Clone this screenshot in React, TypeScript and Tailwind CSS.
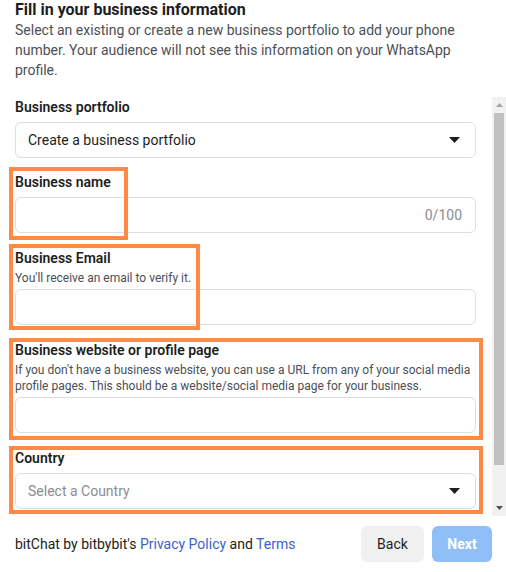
import { ReactNode } from 'react'

function Caret() {
  return (
    <svg width="11" height="6" viewBox="0 0 11 6" className="shrink-0">
      <path d="M0 0h11L5.5 6z" fill="#1c1e21" />
    </svg>
  )
}

function SelectBox({ value, placeholder }: { value: string; placeholder?: boolean }) {
  return (
    <div className="mt-[5px] flex h-9 items-center justify-between rounded-md border border-[#dadde1] bg-white pl-3 pr-[15px]">
      <span className={placeholder ? 'text-[14px] text-[#8a8d91]' : 'text-[14px] text-[#1c1e21]'}>{value}</span>
      <Caret />
    </div>
  )
}

function Field({
  label,
  help,
  children,
  className,
}: {
  label: string
  help?: ReactNode
  children: ReactNode
  className?: string
}) {
  return (
    <div className={className}>
      <div className="text-[14px] font-semibold leading-5 text-[#1c1e21]">{label}</div>
      {help && <div className="mt-[2px] text-[12px] leading-4 text-[#4b4f56]">{help}</div>}
      {children}
    </div>
  )
}

function Highlight({ className }: { className: string }) {
  return <div className={`pointer-events-none absolute border-4 border-[#ff8a45] ${className}`} />
}

export default function App() {
  return (
    <div className="relative flex h-[572px] w-[506px] flex-col overflow-hidden bg-white font-['Roboto',sans-serif] text-[#1c1e21]">
      <header className="shrink-0 px-[15px] pb-[17px]">
        <h1 className="text-[16px] font-bold leading-5 text-[#1c1e21]">Fill in your business information</h1>
        <p className="text-[14px] leading-5 text-[#4b4f56]">
          Select an existing or create a new business portfolio to add your phone number. Your audience will not
          see this information on your WhatsApp profile.
        </p>
      </header>

      <div className="flex min-h-0 flex-1">
        <div className="flex-1 overflow-hidden pl-[15px] pr-[16px]">
          <Field label="Business portfolio">
            <SelectBox value="Create a business portfolio" />
          </Field>

          <Field label="Business name" className="mt-[14px]">
            <div className="mt-[5px] flex h-9 items-center justify-end rounded-md border border-[#dadde1] pr-[13px]">
              <span className="text-[14px] text-[#8a8d91]">0/100</span>
            </div>
          </Field>

          <Field label="Business Email" help="You'll receive an email to verify it." className="mt-[15px]">
            <div className="mt-[3px] h-9 rounded-md border border-[#dadde1]" />
          </Field>

          <Field
            label="Business website or profile page"
            help="If you don't have a business website, you can use a URL from any of your social media profile pages. This should be a website/social media page for your business."
            className="mt-[15px]"
          >
            <div className="mt-[3px] h-9 rounded-md border border-[#dadde1]" />
          </Field>

          <Field label="Country" className="mt-[15px]">
            <SelectBox value="Select a Country" placeholder />
          </Field>
        </div>

        {/* scrollbar */}
        <div className="flex w-[14px] shrink-0 flex-col bg-[#f1f1f1]">
          <div className="flex h-4 items-center justify-center">
            <svg width="7" height="4" viewBox="0 0 7 4">
              <path d="M0 4h7L3.5 0z" fill="#a3a3a3" />
            </svg>
          </div>
          <div className="mx-[2px] h-[352px] bg-[#c1c1c1]" />
          <div className="flex-1" />
          <div className="flex h-4 items-center justify-center">
            <svg width="7" height="4" viewBox="0 0 7 4">
              <path d="M0 0h7L3.5 4z" fill="#505050" />
            </svg>
          </div>
        </div>
      </div>

      <footer className="flex h-14 shrink-0 items-center justify-between pl-[15px] pr-[14px]">
        <p className="text-[14px] text-[#1c1e21]">
          bitChat by bitbybit's <span className="text-[#3b63c9]">Privacy Policy</span> and{' '}
          <span className="text-[#3b63c9]">Terms</span>
        </p>
        <div className="flex gap-2">
          <button className="h-9 w-[63px] rounded-md bg-[#f0f0f0] text-[14px] text-[#1c1e21]">Back</button>
          <button className="h-9 w-[60px] rounded-md bg-[#90bff8] text-[14px] font-bold text-white">Next</button>
        </div>
      </footer>

      <Highlight className="left-[9px] top-[167px] h-[73px] w-[119px]" />
      <Highlight className="left-[9px] top-[244px] h-[86px] w-[191px]" />
      <Highlight className="left-[9px] top-[338px] h-[102px] w-[474px]" />
      <Highlight className="left-[9px] top-[446px] h-[68px] w-[474px]" />
    </div>
  )
}
